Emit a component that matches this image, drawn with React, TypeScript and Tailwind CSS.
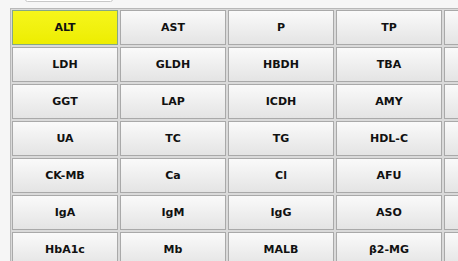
const TESTS = [
  ['ALT', 'AST', 'P', 'TP', ''],
  ['LDH', 'GLDH', 'HBDH', 'TBA', ''],
  ['GGT', 'LAP', 'ICDH', 'AMY', ''],
  ['UA', 'TC', 'TG', 'HDL-C', ''],
  ['CK-MB', 'Ca', 'Cl', 'AFU', ''],
  ['IgA', 'IgM', 'IgG', 'ASO', ''],
  ['HbA1c', 'Mb', 'MALB', 'β2-MG', ''],
]

function TestButton({ label, selected }: { label: string; selected: boolean }) {
  return (
    <button
      type="button"
      className={[
        'h-[35px] w-[106px] shrink-0 border pt-px text-[11px] font-bold text-[#111]',
        selected
          ? 'border-[#86a886] bg-gradient-to-b from-[#f6f61a] to-[#eded00]'
          : 'border-[#a9a9a9] bg-gradient-to-b from-[#fafafa] to-[#e4e4e4]',
      ].join(' ')}
    >
      {label}
    </button>
  )
}

export default function App() {
  return (
    <div
      className="h-[261px] w-[458px] overflow-hidden bg-[#f6f6f6]"
      style={{ fontFamily: '"DejaVu Sans", Verdana, sans-serif' }}
    >
      <div className="ml-[25px] h-[5px] w-[88px] -translate-y-[3px] rounded-[3px] border border-[#c8c8c8] bg-white" />
      <div className="ml-[10px] mt-[3px] flex w-max flex-col gap-[2px] border border-[#b8b8b8] bg-[#dadada] p-px">
        {TESTS.map((row, ri) => (
          <div key={ri} className="flex gap-[2px]">
            {row.map((t, ci) => (
              <TestButton key={ci} label={t} selected={ri === 0 && ci === 0} />
            ))}
          </div>
        ))}
      </div>
    </div>
  )
}
